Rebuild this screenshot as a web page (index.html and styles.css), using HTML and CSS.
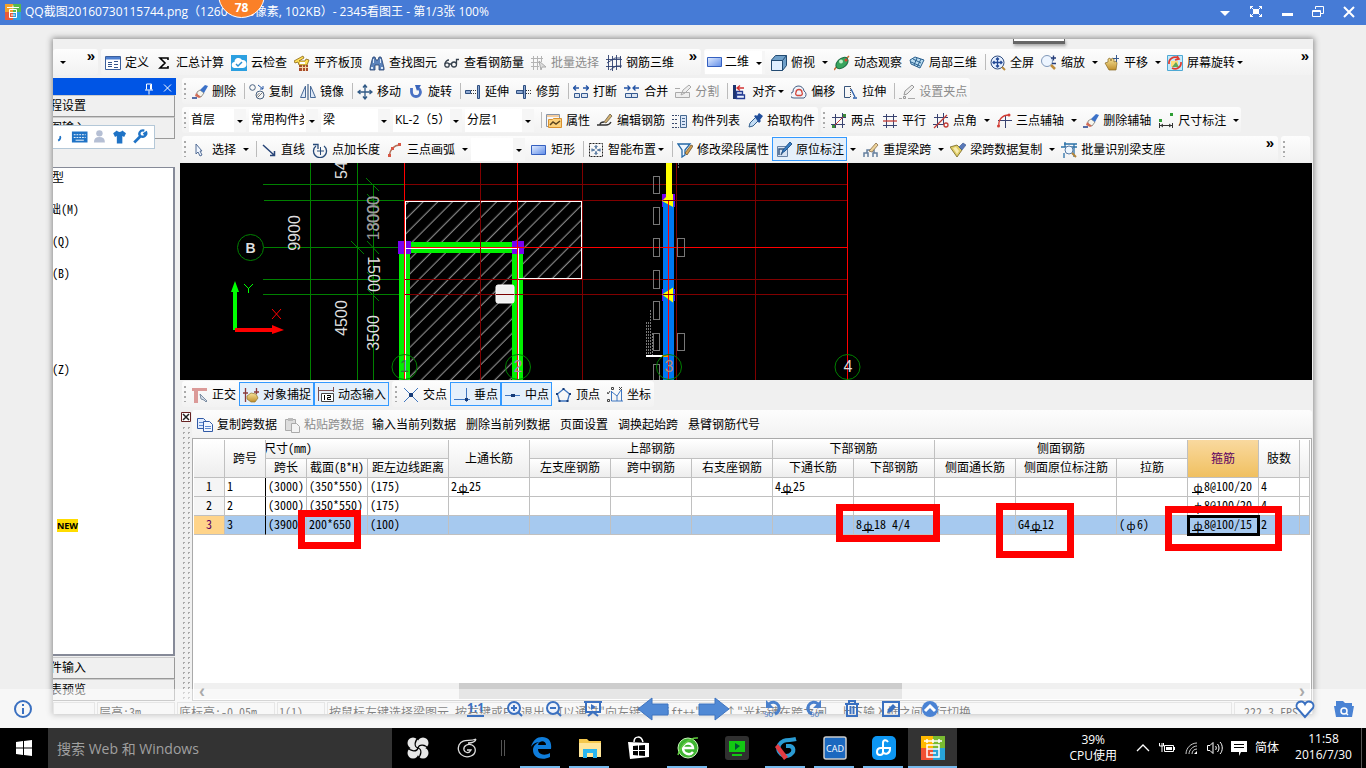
FILE: index.html
```html
<!DOCTYPE html>
<html lang="zh-CN">
<head>
<meta charset="utf-8">
<title>2345看图王</title>
<link rel="stylesheet" href="styles.css">
</head>
<body>
<svg class="sprite" aria-hidden="true">
<defs>
<linearGradient id="gBlue" x1="0" y1="0" x2="1" y2="1"><stop offset="0" stop-color="#e4eeff"/><stop offset="1" stop-color="#5f8ce8"/></linearGradient>
<linearGradient id="gGold" x1="0" y1="0" x2="0" y2="1"><stop offset="0" stop-color="#f8e49a"/><stop offset="1" stop-color="#c08f2c"/></linearGradient>
<pattern id="hatch" width="10.4" height="10.4" patternUnits="userSpaceOnUse" patternTransform="rotate(45)"><path d="M5 0V10.4" stroke="#c8c8c8" stroke-width=".8"/></pattern>
</defs>
<symbol id="define" viewBox="0 0 16 16"><path fill="#fff" stroke="#3b5f9c" d="M.5 1.500h15v13H.5z"/><path fill="#4d7fd0" d="M1 2h14v2.500H1z"/><path stroke="#34558c" d="M3 7.500h4M3 11.500h4M9 6.500h4M9 9.500h4M9 12.500h4M3 9.500h4"/></symbol>
<symbol id="sum" viewBox="0 0 16 16"><path fill="none" stroke="#000" stroke-width="1.600" d="M12 5V3H4l5 5-5 5h8v-2"/></symbol>
<symbol id="cloud" viewBox="0 0 16 16"><path fill="#2b9fe0" d="M0 0h16v16H0z"/><path fill="#fff" d="M4 13a3 3 0 0 1-.5-6A4 4 0 0 1 11 5a4 4 0 0 1 1 8z"/><path fill="none" stroke="#2b8fd0" stroke-width="1.500" d="m5 9 2 2 4-4"/></symbol>
<symbol id="align-top" viewBox="0 0 16 16"><path fill="#a84a2c" d="M5 10h9v6H5z"/><path stroke="#f4d6a8" d="M5 12.500h9M8.500 10v6M11.500 10v6"/><path fill="#ffdf55" stroke="#8a6414" stroke-width=".8" d="m0 6 9-5 1 2-5 3h6l1-2 3 1-2 5H5l-1-3-3 1z"/><path fill="#fff" d="M6 7h5v2H6z"/></symbol>
<symbol id="find" viewBox="0 0 16 16"><path fill="#5c83bb" stroke="#23406f" stroke-width=".8" d="m1 13 2-8 1-3h2l1 3h2l1-3h2l1 3 2 8v2h-5v-5H6v5H1z"/><path fill="#dce8f8" d="M2 12h2v2H2zM12 12h2v2h-2zM4 4h1v4H4zM11 4h1v4h-1z"/></symbol>
<symbol id="glasses" viewBox="0 0 16 16"><g fill="none" stroke="#35404c" stroke-width="1.300"><circle cx="3" cy="10" r="2.200"/><circle cx="10" cy="9.500" r="2.500"/><path d="M5 9h2.500M1 9c0-2 2-4 4-4M12.500 9V4.500H15"/></g></symbol>
<symbol id="batch" viewBox="0 0 16 16"><path fill="none" stroke="#b4b4b4" d="M0 3.500h12M0 7.500h10M0 11.500h8M2.500 1v14M6.500 1v14M10.500 1v6"/><path fill="#ddd" stroke="#aaa" d="m8 6 7 6h-4l-1 3z"/></symbol>
<symbol id="rebar3d" viewBox="0 0 16 16"><path fill="none" stroke="#2e406f" stroke-width=".9" d="M0 4.500h16M0 11.500h14M2.500 0v15M6.500 1v15M10.500 0v15M14.500 1v12M1 8l8-5h6M4 15l6-4h6"/></symbol>
<symbol id="rect" viewBox="0 0 16 16"><path fill="url(#gBlue)" stroke="#3560c0" d="M.5 3.500h14v9H.5z"/></symbol>
<symbol id="cube" viewBox="0 0 16 16"><path fill="#6f9fc8" stroke="#234b72" d="m.5 5 4-4.500h11v10l-4 5H.5z"/><path fill="#e0efff" d="M1 5.500h10V15H1z"/><path fill="none" stroke="#234b72" d="M.5 5.500h11v10M11.500 5.500l4-5"/></symbol>
<symbol id="orbit" viewBox="0 0 16 16"><path fill="none" stroke="#c66b33" stroke-width="1.500" d="M4 10l-4 5M12 4l3-3"/><ellipse cx="8" cy="8" rx="7" ry="4.500" fill="#39a55e" stroke="#1d6a42" transform="rotate(-40 8 8)"/><circle cx="7" cy="6.500" r="2" fill="#bff0c8"/><circle cx="12" cy="5" r="1.500" fill="#d9422e"/></symbol>
<symbol id="local3d" viewBox="0 0 16 16"><g fill="#b9dcf0" stroke="#295f8e"><path d="m1 5 5-3 9 3-4 8-9-4z"/><path fill="none" d="m4 4 8 4M8 3 5 10M12 4l-4 8M2 7l9 4"/></g></symbol>
<symbol id="full" viewBox="0 0 16 16"><circle cx="7.500" cy="7.500" r="6.500" fill="#e6f0ff" stroke="#304d80"/><path stroke="#b88a3c" stroke-width="2" d="m12 12 3 3"/><path fill="none" stroke="#244a96" stroke-width="1.300" d="M3 7.500h9M7.500 3v9M6 4.500 7.500 3 9 4.500M6 10.500 7.500 12 9 10.500M4.500 6 3 7.500 4.500 9M10.500 6 12 7.500 10.500 9"/></symbol>
<symbol id="zoom" viewBox="0 0 16 16"><circle cx="6" cy="6" r="5.500" fill="#edf5ff" stroke="#8097b8"/><path stroke="#be8c3b" stroke-width="2.500" d="m10 10 4 4"/><path stroke="#263d79" stroke-width="1.300" d="M10 3h5M12.500.5v5M11 8.500h4"/></symbol>
<symbol id="pan" viewBox="0 0 16 16"><path fill="url(#gGold)" stroke="#876720" stroke-width=".7" d="m1 8 3-1V4l2-1 1 3 1-3 2 1v3l2-1 1 2-1 7H5z"/><path fill="none" stroke="#37598c" d="M9 3.500h6M12.500 0v7"/></symbol>
<symbol id="screenrot" viewBox="0 0 16 16"><path fill="#c6e9fa" stroke="#4ea9d4" d="M.5.5h15v15H.5z"/><path fill="#ffdf7a" d="M4 6h7v6H4z"/><path fill="#61a956" d="m5 12 4-5 3 5z"/><path fill="none" stroke="#df3c30" stroke-width="1.700" d="M2 9a6 6 0 0 1 9-6M14 7a6 6 0 0 1-9 6M10 1l2 3-4 1"/></symbol>
<symbol id="erase" viewBox="0 0 16 16"><path fill="#f5f5ee" stroke="#6c6860" stroke-width=".7" d="m5 8 3-2 4 3-3 4-4-2z"/><path fill="#3b71c8" d="m8 6 5-5 3 1-4 7z"/><path fill="#d26c57" d="m4 9 5 4-2 1-4-2z"/><path stroke="#1f3f8c" stroke-width="1.500" d="M0 14h5"/></symbol>
<symbol id="copy" viewBox="0 0 16 16"><g fill="none" stroke="#49617f"><circle cx="3.500" cy="3.500" r="2.800"/><circle cx="11" cy="11" r="4"/><path stroke="#777" d="m8.500 13.500 5-5M7.500 12l3-3"/></g><path fill="none" stroke="#2657a5" d="m9 1 5 4M14 2v3h-3"/></symbol>
<symbol id="mirror" viewBox="0 0 16 16"><path fill="#e0eaf8" stroke="#486a98" d="M5.500 2v11.500h-5zM10.500 2v11.500h5z"/><path stroke="#224774" d="M8 0v16"/></symbol>
<symbol id="move" viewBox="0 0 16 16"><path fill="none" stroke="#315a86" stroke-width="1.300" d="M1 8h14M8 1v14M6 3.500 8 1l2 2.500M6 12.500 8 15l2-2.500M3.500 6 1 8l2.500 2M12.500 6 15 8l-2.500 2"/></symbol>
<symbol id="rotate" viewBox="0 0 16 16"><path fill="none" stroke="#4a72c4" stroke-width="2.800" d="M3.500 4v4a4.500 4.500 0 0 0 9 0c0-2-1-3-2.500-4"/><path fill="#3a65bb" d="M7 1h6L9 7z"/></symbol>
<symbol id="extend" viewBox="0 0 16 16"><path fill="#8fa9d2" stroke="#2e4f80" d="M.5 6.500h5v3h-5zM12.500 1.500h2v13h-2z"/><path stroke="#333" stroke-dasharray="1 1" d="M6 6.500h6M6 9.500h6"/></symbol>
<symbol id="trim" viewBox="0 0 16 16"><path fill="#8fa9d2" stroke="#2e4f80" d="M7.500 1.500h2v13h-2zM.5 6.500H7v3H.5z"/><path stroke="#333" stroke-dasharray="1 1" d="M10 6.500h6M10 9.500h6"/></symbol>
<symbol id="break" viewBox="0 0 16 16"><path fill="#dbe4f2" stroke="#34598f" d="M1.500 9.500h5v4h-5zM8.500 9.500h6v4h-6z"/><path fill="none" stroke="#2454a5" stroke-width="1.300" d="M0 4h6M3 1.500.5 4 3 6.500M10 4h6M13 1.500 15.500 4 13 6.500"/></symbol>
<symbol id="merge" viewBox="0 0 16 16"><path fill="#dbe4f2" stroke="#34598f" d="M1.500 9.500h6v4h-6zM7.500 9.500h6v4h-6z"/><path fill="none" stroke="#2454a5" stroke-width="1.300" d="M0 4h6M3.500 1.500 6 4 3.500 6.500M9 4h6M11.500 1.500 9 4l2.500 2.500"/></symbol>
<symbol id="split" viewBox="0 0 16 16"><path fill="#eee" stroke="#aaa" d="M.5 8.500h14v5H.5zM6 11l2-5 6-5 2 2-6 6z"/><path stroke="#aaa" d="M0 4.500h5"/></symbol>
<symbol id="align" viewBox="0 0 16 16"><path fill="#1c3470" d="M1 1h3v14H1z"/><path fill="#e8f0ff" stroke="#243c93" stroke-width="1.300" d="M4.500 7.500h6v3h-6zM4.500 11h8v3.500h-8z"/><path fill="none" stroke="#d23232" stroke-width="1.300" d="M5 4h7M8 1.500 5 4l3 2.500"/></symbol>
<symbol id="offset" viewBox="0 0 16 16"><path fill="#f2f5fb" stroke="#465e82" d="M3 14a3 3 0 0 1-1-6 5 5 0 0 1 11-1 4 4 0 0 1 0 7z"/><path fill="none" stroke="#d2473c" stroke-width="1.300" d="M6 11.500a2 2 0 0 1-1-3 3 3 0 0 1 6 0 2 2 0 0 1-1 3z"/></symbol>
<symbol id="stretch" viewBox="0 0 16 16"><path fill="none" stroke="#38557c" d="M8 2.500H2.500v11H8"/><path fill="none" stroke="#555" stroke-dasharray="1 1" d="M8.500 2v12"/><path stroke="#285ca8" stroke-width="1.300" d="m9 5 4 8M11 14h4"/></symbol>
<symbol id="grip-point" viewBox="0 0 16 16"><path fill="#eee" stroke="#999" d="m5 11 1-4 7-6 2 2-7 7zM4.500 12.500h2v2h-2z"/><path stroke="#aaa" d="M0 14.500h3M9 14.500h7"/></symbol>
<symbol id="props" viewBox="0 0 16 16"><path fill="#f5f7fb" stroke="#8794a8" d="M.5 1.500h13v12H.5z"/><path stroke="#f0a040" d="M1 3h12"/><path fill="#fcd07a" stroke="#d9912e" d="M2.500 6.500h4l1-1h8v9h-13z"/><path fill="none" stroke="#5b4520" stroke-width="1.500" d="m4 12 3-3 3 2 4-3"/></symbol>
<symbol id="editbar" viewBox="0 0 16 16"><path fill="#d4b170" stroke="#655b46" stroke-width=".8" d="m7 9 6-8 2 2-6 7z"/><path fill="none" stroke="#333" stroke-width="1.300" d="M0 12h9c2 0 4-1 5-3M3 12c0-3 2-3 4-3"/></symbol>
<symbol id="list" viewBox="0 0 16 16"><path fill="#dce7f8" stroke="#456890" d="M8.500 2.500h6v12h-6z"/><path stroke="#456890" d="M10 5.500h3M10 8.500h3M10 11.500h3"/><path stroke="#39486a" stroke-dasharray="2 1" d="M0 2.500h7M0 6.500h6M0 10.500h6M0 14.500h7"/></symbol>
<symbol id="pick" viewBox="0 0 16 16"><path fill="#c3dcf4" stroke="#34618f" d="m2 14 1-4 6-6 3 3-6 6z"/><path fill="#214f9c" d="m7 3 2-1 1 1 2-3 4 3-3 4 1 1-2 2z"/></symbol>
<symbol id="two" viewBox="0 0 16 16"><path fill="none" stroke="#384270" d="M1 4.500h14M0 11.500h14M4.500 1v14M11.500 0v15"/><path stroke="#c33b35" d="m2 14 12-12"/><path fill="#3f8b3a" d="M1 12h3v3H1zM12 1h3v3h-3z"/></symbol>
<symbol id="parallel" viewBox="0 0 16 16"><path fill="none" stroke="#384270" d="M1 3.500h14M1 12.500h14M4.500 1v14M11.500 1v14"/><path stroke="#c33b35" stroke-width="1.300" d="M1 8h14"/></symbol>
<symbol id="angle" viewBox="0 0 16 16"><path fill="none" stroke="#384270" d="M1 4.500h14M0 11.500h10M4.500 1v14M10.500 0v12"/><path fill="none" stroke="#c33b35" stroke-width="1.300" d="m1 15 13-13"/><circle cx="13" cy="12" r="2" fill="none" stroke="#c33b35" stroke-width="1.300"/></symbol>
<symbol id="threeaxis" viewBox="0 0 16 16"><path stroke="#384270" d="M2 7.500h14M9.500 2v13"/><path fill="none" stroke="#d23d35" stroke-width="1.300" d="M3 13C2 7 6 2 13 2"/><circle cx="2.500" cy="13" r="1.500" fill="#d23d35"/><circle cx="13" cy="2" r="1.500" fill="#d23d35"/></symbol>
<symbol id="dim" viewBox="0 0 16 16"><path fill="#2f9e35" d="M1 6h3v3H1zM12 0h3v3h-3z"/><path fill="none" stroke="#333" d="M1.500 10v5M14.500 10v5M2 12.500h12M5 11l-2 1.500L5 14M11 11l2 1.500-2 1.500"/></symbol>
<symbol id="cursor" viewBox="0 0 16 16"><path fill="#f0f6ff" stroke="#526c95" d="m4 2 6 7H8l2 4-2 1-2-4-2 2z"/></symbol>
<symbol id="line" viewBox="0 0 16 16"><path fill="none" stroke="#274477" stroke-width="1.500" d="m2 3 11 10M9 13.500h4.500V9"/></symbol>
<symbol id="length" viewBox="0 0 16 16"><path fill="none" stroke="#274a79" stroke-width="1.300" d="M4 4a6.500 6.500 0 1 0 8 0M1 2.500h5V7"/><path fill="none" stroke="#274a79" d="M5 9h7M8.500 5v8"/></symbol>
<symbol id="arc" viewBox="0 0 16 16"><path fill="none" stroke="#b0705a" stroke-width="1.300" d="M2.500 14C2.500 8 7 3 13 3"/><path fill="#d85745" d="M1 12h3v3H1zM4 5h3v3H4zM11 1h3v3h-3z"/></symbol>
<symbol id="smart" viewBox="0 0 16 16"><path fill="none" stroke="#222" stroke-dasharray="2 1" d="M1.500 1.500h13v13h-13z"/><path fill="none" stroke="#315b8b" d="M3 8h4M9 8h4M8 3v4M8 9v4M4 6.500 5.500 8 4 9.500M12 6.500 10.500 8 12 9.500M6.500 4 8 5.500 9.500 4M6.500 12 8 10.500 9.500 12"/></symbol>
<symbol id="filter" viewBox="0 0 16 16"><path fill="#eef6ff" stroke="#2367a5" stroke-width="1.300" d="M1 2h12L8 8v5l-3 2V8z"/><path fill="#d4a152" stroke="#68512c" stroke-width=".8" d="m8 11 6-8 2 1-6 9z"/></symbol>
<symbol id="inplace" viewBox="0 0 16 16"><path fill="#d6e2f2" stroke="#6882a5" d="M1.500 4.500h10v10h-10z"/><path fill="none" stroke="#3c5c83" stroke-width="1.500" d="M3 13V7h5M5 13l3-6"/><path fill="#367ec5" stroke="#24588f" d="m6 11 1-3 7-8 2 2-7 7z"/></symbol>
<symbol id="span" viewBox="0 0 16 16"><path fill="none" stroke="#65809f" stroke-width="1.500" d="M1 15v-4h4v4M10 15v-4h4v4M4 11V8h7v3"/><path fill="#eed39a" stroke="#876b46" stroke-width=".8" d="m6 9 7-8 2 2-6 7z"/></symbol>
<symbol id="brush" viewBox="0 0 16 16"><path fill="#dfcc65" stroke="#746422" stroke-width=".8" d="m0 5 7-2 5 5-5 7z"/><path fill="#f7ecb0" d="m3 6 3-1 3 4-2 3z"/><path fill="#5879b9" stroke="#35508c" stroke-width=".6" d="m9 5 4-4 3 2-4 5z"/></symbol>
<symbol id="identify" viewBox="0 0 16 16"><path stroke="#2b71a8" stroke-width="1.300" d="M3 2h13M0 5h5M10 5h6M4 0v5M13 2v13M3 11v5"/><circle cx="8" cy="8" r="4" fill="#eef7ff" stroke="#5579a4"/><path stroke="#b3853b" stroke-width="2" d="m11 11 4 4"/></symbol>
<symbol id="ortho" viewBox="0 0 16 16"><path fill="#db9a98" d="M0 1h15v3H6v12H2V4H0z"/><path fill="#d4dde8" stroke="#71839a" stroke-width=".9" d="m8 7 5 5 2 2-1 1-2-2-3-1z"/></symbol>
<symbol id="snap" viewBox="0 0 16 16"><path stroke="#8a3b3b" stroke-width="1.300" d="M2.500 1v14M0 6h5M13.500 1v6M11 5h5"/><path fill="url(#gGold)" stroke="#8f722d" stroke-width=".7" d="m4 9 4-3 5 1 2 4-3 4H8l-4-3z"/></symbol>
<symbol id="dyn" viewBox="0 0 16 16"><path stroke="#7c4f4f" d="M.5 0v14M15.500 0v5M1 3.500h14"/><path fill="#fff" stroke="#444" d="M3.500 6.500h12v8h-12z"/><path fill="none" stroke="#000" d="M6.500 8v5M9 8.500h3.500v2h-3v2H13"/></symbol>
<symbol id="cross" viewBox="0 0 16 16"><path stroke="#3f76c0" d="m1 1 14 14M15 1 1 15"/><path fill="#173c78" d="M6 6h4v4H6z"/></symbol>
<symbol id="perp" viewBox="0 0 16 16"><path stroke="#3f76c0" d="M0 12.500h16M12.500 1v14"/><path fill="#173c78" d="M11 11h3v3h-3z"/></symbol>
<symbol id="mid" viewBox="0 0 16 16"><path stroke="#3f76c0" d="M0 8.500h15"/><path fill="#173c78" d="M6 7h4v3H6z"/></symbol>
<symbol id="penta" viewBox="0 0 16 16"><path fill="none" stroke="#3f76c0" stroke-width="1.300" d="m7.500 2 6 5-2 7h-8l-2-7z"/><path fill="#173c78" d="M6.500 1h2v2h-2zM0 6h2v2H0zM13 6h2v2h-2zM2.500 13h2v2h-2zM10.500 13h2v2h-2z"/></symbol>
<symbol id="coord" viewBox="0 0 16 16"><path fill="none" stroke="#3f76c0" d="M4.500 4v10H16M5 5l5 4 4-6M10 9v5M14.500 3v11"/><path fill="none" stroke="#444" d="M4.500.500h2v2h-2zM12 0l3 3M15 0l-3 3M.5 12.500h2v2h-2zM0 5l1 2 2-3"/></symbol>
<symbol id="doc-copy" viewBox="0 0 16 16"><path fill="#e1ecff" stroke="#315aa6" d="M.5 1.500h6l2 2v8h-8z"/><path fill="#f3f7ff" stroke="#315aa6" d="M6.500 4.500h6l3 3v7h-9z"/><path stroke="#5e89cf" d="M2 5.500h4M2 8.500h4M8 9.500h6M8 11.500h6"/></symbol>
<symbol id="paste" viewBox="0 0 16 16"><path fill="#ddd" stroke="#aaa" d="M1.500 2.500h10v11h-10z"/><path fill="#bbb" d="M4 1h5v3H4z"/><path fill="#f4f4f4" stroke="#aaa" d="M7.500 6.500h5l3 3v6h-8z"/></symbol>
</svg>

<header class="titlebar">
  <svg class="icon" viewBox="0 0 16 16"><path fill="#f3a22c" d="M0 0h8v8H0z"/><path fill="#57b94c" d="M8 0h8v8H8z"/><path fill="#e85a3c" d="M0 8h8v8H0z"/><path fill="#2f9fe0" d="M8 8h8v8H8z"/><path fill="none" stroke="#fff" d="M2 3.500h12M8 1.500v3M4.500 5.500h7v8h-7zM5 8.500h6M6 11h4"/></svg>
  <h1>QQ截图20160730115744.png（1260*675像素, 102KB）- 2345看图王 - 第1/3张 100%</h1>
  <div class="window-buttons">
    <button aria-label="菜单"><svg viewBox="0 0 16 16"><path fill="#fff" d="M3 7h10l-5 5z"/></svg></button>
    <button aria-label="全屏"><svg viewBox="0 0 16 16"><path fill="#fff" d="M5 5h6v5H5z"/><path fill="none" stroke="#fff" d="M2.500 5V2.500H5M11 2.500h2.500V5M2.500 10v2.500H5M11 12.500h2.500V10M2 2l3 3M14 2l-3 3M2 13l3-3M14 13l-3-3"/></svg></button>
    <button aria-label="最小化"><svg viewBox="0 0 16 16"><path fill="#fff" d="M3 9h11v3H3z"/></svg></button>
    <button aria-label="还原"><svg viewBox="0 0 16 16"><path fill="none" stroke="#fff" d="M5.500 5V2.500h8v7H11"/><path fill="none" stroke="#fff" d="M2.500 6.500h8v6h-8zM3 7.500h7"/></svg></button>
    <button aria-label="关闭"><svg viewBox="0 0 16 16"><path stroke="#fff" stroke-width="2" d="m3 3 10 10M13 3 3 13"/></svg></button>
  </div>
  <div class="badge">78</div>
</header>

<main class="stage">
 <section class="picture">
  <div class="cut-strip"><span></span></div>
  <div class="bar-row top-row">
    <div class="bar stub"><i class="arrow"></i><span class="more">»</span></div>
    <div class="bar first-bar">
      <button class="tool"><svg><use href="#define"/></svg>定义</button>
      <button class="tool"><svg><use href="#sum"/></svg>汇总计算</button>
      <button class="tool"><svg><use href="#cloud"/></svg>云检查</button>
      <button class="tool"><svg><use href="#align-top"/></svg>平齐板顶</button>
      <button class="tool"><svg><use href="#find"/></svg>查找图元</button>
      <button class="tool"><svg><use href="#glasses"/></svg>查看钢筋量</button>
      <button class="tool" disabled><svg><use href="#batch"/></svg>批量选择</button>
      <button class="tool"><svg><use href="#rebar3d"/></svg>钢筋三维</button>
      <span class="more">»</span>
    </div>
    <div class="bar grow">
      <label class="combo view"><svg><use href="#rect"/></svg><select aria-label="视图"><option>二维</option></select></label>
      <button class="tool"><svg><use href="#cube"/></svg>俯视<i class="arrow"></i></button>
      <button class="tool"><svg><use href="#orbit"/></svg>动态观察</button>
      <button class="tool"><svg><use href="#local3d"/></svg>局部三维</button>
      <i class="sep"></i>
      <button class="tool"><svg><use href="#full"/></svg>全屏</button>
      <button class="tool"><svg><use href="#zoom"/></svg>缩放<i class="arrow"></i></button>
      <button class="tool"><svg><use href="#pan"/></svg>平移<i class="arrow"></i></button>
      <button class="tool"><svg><use href="#screenrot"/></svg>屏幕旋转<i class="arrow tight"></i></button>
      <span class="more">»</span>
    </div>
  </div>

  <div class="work">
   <aside class="side">
    <div class="side-title"><svg viewBox="0 0 34 14"><path fill="none" stroke="#fff" d="M3 10.500h8M7 11v4M4.500 10V4.500h5V10M8.500 5v5"/><path stroke="#fff" d="m22 5 7 7M29 5l-7 7"/></svg></div>
    <button class="side-tab">程设置</button>
    <button class="side-tab">图输入</button>
    <div class="side-gap"></div>
    <ul class="tree">
      <li>型</li><li class="cut">础(M)</li><li>(Q)</li><li>(B)</li><li></li><li></li><li>(Z)</li>
      <li class="new"><b>NEW</b></li>
    </ul>
    <button class="side-tab">件输入</button>
    <button class="side-tab">表预览</button>
    <div class="ime">
      <svg viewBox="0 0 102 24"><path fill="none" stroke="#1f73c6" stroke-width="2" d="M3 11c1 2 0 4-2 5"/><path fill="#1f73c6" d="M16 6h17v12H16z"/><path stroke="#fff" stroke-dasharray="2 1" d="M18 9.500h13M18 12.500h13"/><path stroke="#fff" d="M20 15.500h9"/><g fill="#b5bfd4"><circle cx="46" cy="8" r="3.500"/><path d="M40 18c0-4 2-6 6-6s6 2 6 6z"/></g><path fill="#1f73c6" d="m61 8 4-3c1 2 5 2 6 0l4 3-2 4-2-1v8h-6v-8l-2 1z"/><path stroke="#1f73c6" stroke-width="3" d="m84 18 7-7"/><path fill="none" stroke="#1f73c6" stroke-width="2.500" d="M95 5c-5-1-7 4-4 6 3 2 7-1 6-4l-3 2"/></svg>
    </div>
   </aside>

   <div class="content">
    <div class="bar-row">
     <div class="bar"><i class="grip"></i>
      <button class="tool"><svg><use href="#erase"/></svg>删除</button><i class="sep"></i>
      <button class="tool"><svg><use href="#copy"/></svg>复制</button>
      <button class="tool"><svg><use href="#mirror"/></svg>镜像</button><i class="sep"></i>
      <button class="tool"><svg><use href="#move"/></svg>移动</button>
      <button class="tool"><svg><use href="#rotate"/></svg>旋转</button><i class="sep"></i>
      <button class="tool"><svg><use href="#extend"/></svg>延伸</button>
      <button class="tool"><svg><use href="#trim"/></svg>修剪</button><i class="sep"></i>
      <button class="tool"><svg><use href="#break"/></svg>打断</button>
      <button class="tool"><svg><use href="#merge"/></svg>合并</button>
      <button class="tool" disabled><svg><use href="#split"/></svg>分割</button><i class="sep"></i>
      <button class="tool"><svg><use href="#align"/></svg>对齐<i class="arrow tight"></i></button>
      <button class="tool"><svg><use href="#offset"/></svg>偏移</button>
      <button class="tool"><svg><use href="#stretch"/></svg>拉伸</button><i class="sep"></i>
      <button class="tool" disabled><svg><use href="#grip-point"/></svg>设置夹点</button>
     </div>
    </div>
    <div class="bar-row">
     <div class="bar"><i class="grip"></i>
      <label class="combo short"><select aria-label="楼层"><option>首层</option></select></label>
      <label class="combo"><select aria-label="构件类型"><option>常用构件类</option></select></label>
      <label class="combo"><select aria-label="构件"><option>梁</option></select></label>
      <label class="combo"><select aria-label="名称"><option>KL-2（5）</option></select></label>
      <label class="combo"><select aria-label="分层"><option>分层1</option></select></label><i class="sep"></i>
      <button class="tool"><svg><use href="#props"/></svg>属性</button>
      <button class="tool"><svg><use href="#editbar"/></svg>编辑钢筋</button>
      <button class="tool"><svg><use href="#list"/></svg>构件列表</button>
      <button class="tool"><svg><use href="#pick"/></svg>拾取构件</button>
     </div>
     <div class="bar"><i class="grip"></i>
      <button class="tool"><svg><use href="#two"/></svg>两点</button>
      <button class="tool"><svg><use href="#parallel"/></svg>平行</button>
      <button class="tool"><svg><use href="#angle"/></svg>点角<i class="arrow"></i></button>
      <button class="tool"><svg><use href="#threeaxis"/></svg>三点辅轴<i class="arrow"></i></button>
      <button class="tool"><svg><use href="#erase"/></svg>删除辅轴</button>
      <button class="tool"><svg><use href="#dim"/></svg>尺寸标注<i class="arrow"></i></button>
     </div>
    </div>
    <div class="bar-row">
     <div class="bar grow"><i class="grip"></i>
      <button class="tool"><svg><use href="#cursor"/></svg>选择<i class="arrow"></i></button><i class="sep"></i>
      <button class="tool"><svg><use href="#line"/></svg>直线</button>
      <button class="tool"><svg><use href="#length"/></svg>点加长度</button>
      <button class="tool"><svg><use href="#arc"/></svg>三点画弧<i class="arrow"></i></button>
      <label class="combo narrow"><select aria-label="半径"><option></option></select></label>
      <button class="tool"><svg><use href="#rect"/></svg>矩形</button><i class="sep"></i>
      <button class="tool"><svg><use href="#smart"/></svg>智能布置<i class="arrow tight"></i></button><i class="sep"></i>
      <button class="tool"><svg><use href="#filter"/></svg>修改梁段属性</button>
      <button class="tool on"><svg><use href="#inplace"/></svg>原位标注</button><i class="arrow split"></i>
      <button class="tool"><svg><use href="#span"/></svg>重提梁跨<i class="arrow"></i></button>
      <button class="tool"><svg><use href="#brush"/></svg>梁跨数据复制<i class="arrow"></i></button>
      <button class="tool"><svg><use href="#identify"/></svg>批量识别梁支座</button>
      <span class="more">»</span>
     </div>
     <div class="bar tail"><i class="grip"></i></div>
    </div>

    <div class="drawing">
     <svg width="1132" height="217" viewBox="180 163 1132 217" font-family="Liberation Sans, Arial, sans-serif">
      <path fill="url(#hatch)" d="M405 201h177v77h-64v102H405z"/>
      <g fill="none" stroke="#008000" shape-rendering="crispEdges"><path d="M310.500 163v217M357.500 163v217M373.500 184v196M263 184.500h142M264 200.500h141M264 247.500h141M263 279.500h142M263 294.500h142"/></g>
      <path fill="none" stroke="#008000" d="m366 178 13 13M367 194l12 13M351 241l13 13M367 241l12 13M367 272l12 13M367 289l12 12"/>
      <path fill="#00f000" d="M399 242h125v11H399zM399 253h11v127h-11zM512 253h11v127h-11z"/>
      <path fill="#7800f0" d="M398 241h13v13h-13zM512 241h12v13h-12zM662 194h13v13h-13zM662 289h13v12h-13z"/>
      <path fill="#0078f0" d="M663 200h11v180h-11z"/>
      <path fill="none" stroke="#fff" shape-rendering="crispEdges" d="M405.500 380V201.500h176v77h-64M406 248.500h112V380"/>
      <g shape-rendering="crispEdges" fill="none"><path stroke="#800000" d="M405 184.500h443M405 200.500h443M405 279.500h443M405 294.500h443M480.500 163v217M582.500 163v217M676.500 163v217M755.500 163v217"/><path stroke="#f00" d="M404.500 163v217M517.500 163v217M847.500 163v217M411 247.500h437"/></g>
      <path fill="#ff0" d="M666 163h6v31h1v13l-11-6 4-4zM662 294.500l11-7v15z"/>
      <path stroke="#f00" shape-rendering="crispEdges" d="M668.500 201v179"/>
      <path stroke="#780000" d="M663 200.500h10M663 294.500h10"/>
      <rect x="496" y="285" width="18" height="18" rx="2" fill="#f0f0f0" stroke="#fff"/><path stroke="#780000" d="M496 294.500h18"/>
      <g fill="none" stroke="#777" shape-rendering="crispEdges"><path d="M653.500 176.500h6v17h-6zM653.500 207.500h6v17h-6zM653.500 238.500h6v18h-6zM653.500 270.500h6v18h-6zM653.500 301.500h6v18h-6zM653.500 333.500h6v17h-6zM653.500 364.500h6v18h-6zM677.500 238.500h7v18h-7zM677.500 333.500h7v17h-7z"/><path stroke-dasharray="2 1" d="M646.500 322v33M648.500 322v33M650.500 310v45M652 333v22M678.500 163v6"/></g>
      <path stroke="#fff" stroke-width="2" d="M646 356h16"/><path stroke="#f90" stroke-width="2" d="M662 356h6"/>
      <g fill="none" stroke="#008000"><circle cx="250.500" cy="247.500" r="13"/><circle cx="404.500" cy="367" r="12.500"/><circle cx="518" cy="367" r="12.500"/><circle cx="669" cy="367" r="12.500"/><circle cx="847.500" cy="367" r="12.500"/></g>
      <g fill="#ddd" font-size="16" text-anchor="middle"><text x="250.500" y="253" font-size="14" font-weight="bold">B</text><text x="404.500" y="372" fill="#3a6b3a">1</text><text x="518" y="372" fill="#a986b0">2</text><text x="669" y="372" fill="#b18770">3</text><text x="848" y="372">4</text>
       <text transform="translate(347 170) rotate(-90)">54</text><text transform="translate(300 233) rotate(-90)">9900</text><text fill="#999" transform="translate(379 218) rotate(-90)">18000</text><text fill="#999" transform="translate(379 214) rotate(-90)">3000</text><text transform="translate(368 274) rotate(90)">1500</text><text transform="translate(347 318) rotate(-90)">4500</text><text transform="translate(379 333) rotate(-90)">3500</text></g>
      <path fill="#0f0" d="M233 330v-38h-2l4-11 4 11h-2v38z"/><path fill="#f00" d="M235 328h37v-3l12 5-12 4v-2h-37z"/>
      <path fill="none" stroke="#0f0" d="m244 284 4.500 4.500L253 284M248.500 288v5"/><path stroke="#f00" d="m272 309 9 10M281 309l-9 10"/>
     </svg>
    </div>

    <div class="bar-row snap-row">
     <div class="bar"><i class="grip"></i>
      <button class="tool"><svg><use href="#ortho"/></svg>正交</button>
      <button class="tool on"><svg><use href="#snap"/></svg>对象捕捉</button>
      <button class="tool on"><svg><use href="#dyn"/></svg>动态输入</button>
     </div>
     <div class="bar"><i class="grip"></i>
      <button class="tool"><svg><use href="#cross"/></svg>交点</button>
      <button class="tool on"><svg><use href="#perp"/></svg>垂点</button>
      <button class="tool on"><svg><use href="#mid"/></svg>中点</button>
      <button class="tool"><svg><use href="#penta"/></svg>顶点</button>
      <button class="tool"><svg><use href="#coord"/></svg>坐标</button>
     </div>
    </div>

    <div class="sheet">
     <div class="handle"><svg viewBox="0 0 10 10"><path fill="#fff" stroke="#622" d="M.5.5h9v9h-9z"/><path stroke="#222" stroke-width="1.500" d="m2 2 6 6M8 2 2 8"/></svg><i></i></div>
     <div class="sheet-main">
      <div class="bar sheet-bar">
       <button class="tool"><svg><use href="#doc-copy"/></svg>复制跨数据</button>
       <button class="tool" disabled><svg><use href="#paste"/></svg>粘贴跨数据</button>
       <button class="tool text">输入当前列数据</button><button class="tool text">删除当前列数据</button><button class="tool text">页面设置</button><button class="tool text">调换起始跨</button><button class="tool text">悬臂钢筋代号</button>
      </div>
      <div class="grid">
       <table>
        <colgroup><col class="w31"><col class="w41"><col class="w41"><col class="w61"><col class="w81"><col class="w81"><col class="w81"><col class="w81"><col class="w81"><col class="w81"><col class="w81"><col class="w81"><col class="w101"><col class="w71"><col class="w71"><col class="w41"><col></colgroup>
        <thead>
         <tr><th rowspan="2"></th><th rowspan="2" class="frozen">跨号</th><th colspan="3" class="left">尺寸(mm)</th><th rowspan="2">上通长筋</th><th colspan="3">上部钢筋</th><th colspan="2">下部钢筋</th><th colspan="3">侧面钢筋</th><th rowspan="2" class="hot">箍筋</th><th rowspan="2">肢数</th><th rowspan="2"></th></tr>
         <tr><th>跨长</th><th>截面(B*H)</th><th>距左边线距离</th><th>左支座钢筋</th><th>跨中钢筋</th><th>右支座钢筋</th><th>下通长筋</th><th>下部钢筋</th><th>侧面通长筋</th><th>侧面原位标注筋</th><th>拉筋</th></tr>
        </thead>
        <tbody>
         <tr><th>1</th><td class="frozen">1</td><td>(3000)</td><td>(350*550)</td><td>(175)</td><td>2<u>ф</u>25</td><td></td><td></td><td></td><td>4<u>ф</u>25</td><td></td><td></td><td></td><td></td><td><u>ф</u>8@100/20</td><td>4</td><td></td></tr>
         <tr><th>2</th><td class="frozen">2</td><td>(3000)</td><td>(350*550)</td><td>(175)</td><td></td><td></td><td></td><td></td><td></td><td></td><td></td><td></td><td></td><td><u>ф</u>8@100/20</td><td>4</td><td></td></tr>
         <tr class="current"><th>3</th><td class="frozen">3</td><td>(3900</td><td>200*650</td><td>(100)</td><td></td><td></td><td></td><td></td><td></td><td>8<u>ф</u>18 4/4</td><td></td><td>G4<u>ф</u>12</td><td>(<u class="plain">ф</u>6)</td><td class="focus"><u>ф</u>8@100/15</td><td>2</td><td></td></tr>
        </tbody>
       </table>
       <div class="scroll"><span>‹</span><i></i><span>›</span></div>
       <div class="mark m1"></div><div class="mark m2"></div><div class="mark m3"></div><div class="mark m4"></div>
      </div>
     </div>
    </div>
   </div>
  </div>
  <footer class="status"><span class="s1"></span><span class="s2">层高:3m</span><span class="s3">底标高:-0.05m</span><span class="s4">1(1)</span><span class="s5">按鼠标左键选择梁图元,按右键或ESC退出;可以通过"向左键及shift++"→←↑"光标键在跨之间、上下输入框之间进行切换</span><span class="s6">222.3 FPS</span></footer>
 </section>

 <nav class="viewer">
  <div><button aria-label="信息"><svg viewBox="0 0 20 20"><circle cx="10" cy="10" r="8" fill="none" stroke="#3a70c0" stroke-width="2"/><path stroke="#3a70c0" stroke-width="2" d="M10 5v2M10 9v6"/></svg></button></div>
  <div class="viewer-mid">
   <button class="ratio">1:1</button>
   <button aria-label="放大"><svg viewBox="0 0 20 20"><circle cx="9" cy="9" r="6" fill="#edf2fb" stroke="#3a70c0" stroke-width="2"/><path stroke="#3a70c0" stroke-width="2" d="m13 13 4 4M6 9h6M9 6v6"/></svg></button>
   <button aria-label="缩小"><svg viewBox="0 0 20 20"><circle cx="9" cy="9" r="6" fill="#edf2fb" stroke="#3a70c0" stroke-width="2"/><path stroke="#3a70c0" stroke-width="2" d="m13 13 4 4M6 9h6"/></svg></button>
   <button aria-label="幻灯片"><svg viewBox="0 0 20 20"><path fill="none" stroke="#3a70c0" stroke-width="2" d="M1 3h18M3 3v10h14V3M10 13l-5 4M10 13l5 4"/><path fill="#3a70c0" d="m8 5 5 3-5 3z"/></svg></button>
   <button class="wide" aria-label="上一张"><svg viewBox="0 0 32 24"><path fill="#5089d5" stroke="#3f75c0" d="M1 12 15 1v6h16v11H15v5z"/></svg></button>
   <button class="wide" aria-label="下一张"><svg viewBox="0 0 32 24"><path fill="#5089d5" stroke="#3f75c0" d="M31 12 17 1v6H1v11h16v5z"/></svg></button>
   <button aria-label="左转90°"><svg viewBox="0 0 20 20"><path fill="none" stroke="#4a80cc" stroke-width="3" d="M5 5a6 6 0 1 1 6 10"/><path fill="#4a80cc" d="M2 1v8h8z"/><text x="0" y="18">90°</text></svg></button>
   <button aria-label="右转90°"><svg viewBox="0 0 20 20"><path fill="none" stroke="#4a80cc" stroke-width="3" d="M15 5A6 6 0 1 0 9 15"/><path fill="#4a80cc" d="M18 1v8h-8z"/><text x="7" y="18">90°</text></svg></button>
   <button aria-label="删除"><svg viewBox="0 0 20 20"><path fill="none" stroke="#3a70c0" stroke-width="2" d="M3 5h14M7 5V2h6v3M5 6v11h10V6M8.500 7v8M11.500 7v8"/></svg></button>
   <button aria-label="编辑"><svg viewBox="0 0 20 20"><path fill="none" stroke="#3a70c0" stroke-width="2" d="M2 3h16v14H2z"/><path fill="#3a70c0" d="m6 14 1-4 5-5 3 3-5 5z"/></svg></button>
   <button aria-label="收起"><svg viewBox="0 0 20 20"><circle cx="10" cy="10" r="8" fill="#4a83d4"/><path fill="none" stroke="#fff" stroke-width="3" d="m5 12 5-5 5 5"/></svg></button>
  </div>
  <div class="viewer-end">
   <button aria-label="收藏"><svg viewBox="0 0 20 20"><path fill="#fff" stroke="#3a70c0" stroke-width="2" d="M10 18 2 9a4 4 0 0 1 8-4 4 4 0 0 1 8 4z"/></svg></button>
   <button aria-label="打开文件夹"><svg viewBox="0 0 20 20"><path fill="#4a83d4" d="M2 2h7l2 2h7v3H2zM0 7h20l-2 11H2z"/><circle cx="10" cy="12" r="3" fill="none" stroke="#fff" stroke-width="1.500"/><path stroke="#fff" stroke-width="1.500" d="m12 14 2 2"/></svg></button>
  </div>
 </nav>
</main>

<footer class="taskbar">
 <button class="start" aria-label="开始"><svg viewBox="0 0 16 16"><path fill="#fff" d="m0 2 7-1v6.500H0zM8 1l8-1v7.500H8zM0 8.500h7V15l-7-1zM8 8.500h8V16l-8-1z"/></svg></button>
 <input class="search" type="text" placeholder="搜索 Web 和 Windows" aria-label="搜索">
 <div class="apps">
  <button aria-label="风扇"><svg viewBox="0 0 24 24"><g fill="#e8e8e8"><circle cx="7" cy="7" r="5.500"/><circle cx="17" cy="7" r="5.500"/><circle cx="7" cy="17" r="5.500"/><circle cx="17" cy="17" r="5.500"/><path d="M7 7h10v10H7z"/></g><path fill="none" stroke="#000" stroke-width="1.200" d="M12 12C8 11 8 5 13 1M12 12c1-4 7-4 11 1M12 12c4 1 4 7-1 11M12 12c-1 4-7 4-11-1"/></svg></button>
  <button aria-label="龙"><svg viewBox="0 0 24 24"><path fill="none" stroke="#ddd" stroke-width="1.300" d="M21 3c-7 3-13-1-17 6-3 8 5 14 12 11 5-2 6-8 1-11-4-2-9 1-8 5 1 3 5 4 7 0h-4M21 3c-1 4-5 4-8 4"/></svg></button>
  <i class="task-sep"></i>
  <button class="run" aria-label="Edge"><svg viewBox="0 0 24 24"><path fill="#0f7ddb" d="M2 11C4 4 8 1 13 1c7 0 10 5 9 12H9c0 6 7 7 12 4v4c-8 4-17 1-17-7 0-4 3-7 7-8-5 0-8 3-9 5zm7-2h8c0-5-7-5-8 0z"/></svg></button>
  <button class="run" aria-label="文件资源管理器"><svg viewBox="0 0 24 24"><path fill="#f4c74c" d="M1 3h8l2 2h12v16H1z"/><path fill="#ffe69a" d="M1 7h22v14H1z"/><path fill="#29b5ee" d="M5 13h14v9h-4v-5H9v5H5z"/></svg></button>
  <button aria-label="应用商店"><svg viewBox="0 0 24 24"><path fill="#fff" d="m1 6 21 1v14L3 23z"/><path fill="none" stroke="#fff" stroke-width="1.500" d="M7 6c0-6 7-7 9 0"/><path fill="#000" d="m6 10 5-.5V14H6zM12 9.500l6-.5v5h-6zM6 15h5v4.500L6 19zM12 15h6v5l-6-.5z"/></svg></button>
  <button class="run" aria-label="浏览器"><svg viewBox="0 0 24 24"><circle cx="12" cy="12" r="10" fill="#3fb532" stroke="#c9f5b9"/><path fill="none" stroke="#fff" stroke-width="2.500" d="M17 16c-3 4-10 2-10-4s10-6 10 0H8"/><path fill="none" stroke="#5cc83c" stroke-width="1.500" d="M2 19C4 10 14 1 22 2"/></svg></button>
  <button aria-label="播放器"><svg viewBox="0 0 24 24"><rect width="24" height="24" rx="3" fill="#303030"/><path fill="#13c813" d="M4 5h16v11H4zM7 18h10v2H7z"/><path fill="#053" d="m10 7 5 3-5 4z"/></svg></button>
  <button class="run" aria-label="广联达"><svg viewBox="0 0 24 24"><path fill="none" stroke="#2a9bd3" stroke-width="4" d="M22 3c-7 2-13-1-17 6-3 8 5 13 11 10 5-3 4-8 0-9h-4"/><path fill="#e23c43" d="m1 11 3-3 10 13-4 3z"/></svg></button>
  <button class="run" aria-label="CAD"><svg viewBox="0 0 24 24"><rect x="1" y="1" width="22" height="22" rx="2" fill="#1b68bf" stroke="#ccc" stroke-width="1.500"/><text x="12" y="16" text-anchor="middle" fill="#fff" font-size="9">CAD</text></svg></button>
  <button class="run" aria-label="剪切"><svg viewBox="0 0 24 24"><rect width="24" height="24" rx="5" fill="#0d96f2"/><path fill="none" stroke="#fff" stroke-width="2" d="M16 6c-2-3-5-2-5 1v9c0 4-6 4-6 0 0-2 1-4 4-4h10M11 16c2 3 7 2 7-3"/></svg></button>
  <button class="run active" aria-label="2345看图王"><svg viewBox="0 0 24 24"><path fill="#ffb900" d="M0 0h12v12H0z"/><path fill="#7abb32" d="M12 0h12v12H12z"/><path fill="#f05133" d="M0 12h12v12H0z"/><path fill="#28a4d8" d="M12 12h12v12H12z"/><path fill="none" stroke="#fff" stroke-width="1.500" d="M3 5h18M6 3v4M12 3v4M18 3v4M6 9h12v12H6zM6 13h12M9 17h6"/></svg></button>
 </div>
 <div class="cpu">39%<br>CPU使用</div>
 <div class="tray">
  <svg viewBox="0 0 16 16"><path fill="none" stroke="#fff" stroke-width="1.300" d="m2 11 6-6 6 6"/></svg>
  <svg viewBox="0 0 16 16"><path fill="none" stroke="#fff" d="M5.500 5.500h9v6h-9zM3 3v9M.5 3v3h4V3"/><path fill="#fff" d="M7 7h6v3H7zM15 7h1v3h-1z"/></svg>
  <svg viewBox="0 0 16 16"><path fill="none" stroke="#ccc" d="M3 14C3 8 8 3 14 3M6 14c0-4 4-8 8-8M9 14c0-3 2-5 5-5"/><path fill="#fff" d="M11 14h3v-3z"/></svg>
  <svg viewBox="0 0 16 16"><path fill="none" stroke="#fff" d="M.5 5.500H3l3-3v11l-3-3H.5zM8.500 6c1 1 1 3 0 4M10.500 4c2 2 2 6 0 8M13 2c3 3 3 9 0 12"/></svg>
  <svg viewBox="0 0 16 16"><path fill="#fff" d="M0 1h16v11h-6l-2 4v-4H0z"/><path stroke="#000" d="M3 4.500h10M3 7.500h10"/></svg>
  <span>简体</span>
 </div>
 <time class="clock">11:58<br>2016/7/30</time>
</footer>
</body>
</html>
```
FILE: styles.css
```css
* { box-sizing: border-box; }
body { margin: 0; height: 100vh; display: flex; flex-direction: column; overflow: hidden; background: #efefef; color: #000; font: 12px/16px "Open Sans", "Noto Sans CJK SC", sans-serif; }
button { margin: 0; padding: 0; border: 0; background: none; color: inherit; font: inherit; white-space: nowrap; }
.sprite { position: absolute; width: 0; height: 0; }

.titlebar { position: relative; z-index: 5; flex: none; height: 25px; display: flex; align-items: center; padding: 0 9px 2px 5px; background: #467bd6; color: #fff; }
.titlebar .icon { width: 16px; height: 16px; margin-right: 4px; }
.titlebar h1 { margin: 0; font: inherit; white-space: nowrap; }
.window-buttons { margin-left: auto; display: flex; gap: 15px; }
.window-buttons button, .window-buttons svg { display: block; width: 16px; height: 16px; }
.badge { position: absolute; left: 218px; bottom: 7px; width: 47px; height: 47px; padding-top: 28px; border: 1px solid #fff; border-radius: 50%; background: #fa8028; color: #fff; text-align: center; font-weight: bold; line-height: 16px; }

.stage { position: relative; flex: 1; min-height: 0; display: flex; padding: 14px 53px; }
.picture { flex: 1; min-width: 0; display: flex; flex-direction: column; overflow: hidden; background: #f0f0f0; box-shadow: 0 0 6px 1px #888; }
.cut-strip { flex: none; height: 10px; padding-left: 960px; }
.cut-strip span { display: block; width: 52px; height: 5px; border: 2px solid #666; border-width: 0 1px 3px; background: #fff; box-shadow: 1px 2px 3px #aaa; }

.bar-row { flex: none; display: flex; gap: 3px; height: 26px; margin-bottom: 3px; }
.bar { display: flex; align-items: center; height: 26px; border-radius: 3px; background: linear-gradient(#fdfdfd, #f2f2f2); }
.grow { flex: 1; min-width: 0; }
.stub { width: 45px; justify-content: space-between; padding-right: 3px; }
.first-bar { width: 600px; }
.more { align-self: flex-start; margin-left: auto; padding-right: 4px; font: bold 15px/14px "Liberation Sans", sans-serif; }
.stub .more { margin: 0; padding: 0; }
.grip { flex: none; width: 2px; height: 16px; margin: 0 2px; background: repeating-linear-gradient(#aaa 0 2px, transparent 2px 5px); }
.sep { flex: none; width: 1px; height: 16px; margin-left: 5px; background: #bbb; }
.tool { flex: none; display: flex; align-items: center; height: 24px; padding: 1px 3px 0 4px; }
.tool svg { width: 16px; height: 16px; margin-right: 4px; }
.tool:disabled { color: #8c8c8c; }
.tool.on { background: #e5f0fb; box-shadow: inset 0 0 0 1px #3399ff; }
.tool.text { padding: 1px 5px 0; }
.arrow { flex: none; width: 12px; height: 3px; padding-left: 7px; }
.arrow::before { content: ""; display: block; width: 0; border: 3px solid transparent; border-top-color: #000; border-bottom: 0; }
.arrow.tight { width: 8px; padding-left: 2px; }
.arrow.split { padding-left: 3px; }
.combo { position: relative; flex: none; display: flex; align-items: center; width: 69px; height: 23px; margin: 0 2px 0 1px; background: linear-gradient(90deg, #fff 0 57px, #f6f6f6 57px); }
.combo::after { content: ""; position: absolute; right: 3px; top: 11px; border: 3px solid transparent; border-top-color: #000; border-bottom: 0; pointer-events: none; }
.combo select { width: 100%; padding: 0 14px 0 2px; border: 0; background: none; color: inherit; font: inherit; appearance: none; }
.combo.short { width: 57px; background: linear-gradient(90deg, #fff 0 45px, #f6f6f6 45px); }
.combo.narrow { width: 54px; background: linear-gradient(90deg, #fff 0 42px, #f6f6f6 42px); }
.combo.view { width: 60px; }
.combo.view svg { flex: none; width: 16px; height: 16px; margin: 0 0 0 2px; }
.combo.view select { padding-right: 0; }

.work { flex: 1; min-height: 0; display: flex; gap: 4px; }
.side { position: relative; flex: none; width: 123px; display: flex; flex-direction: column; }
.side-title { display: flex; justify-content: flex-end; height: 17px; background: #0055e5; }
.side-title svg { width: 34px; height: 17px; }
.side-tab { flex: none; height: 22px; overflow: hidden; border: solid #999; border-width: 1px 1px 1px 0; border-top-color: #ccc; background: #f0f0f0; text-align: left; text-indent: -3px; margin-right: 1px; }
.side-gap { flex: none; height: 28px; }
.tree { flex: 1; min-height: 0; margin: 0 1px 1px 0; padding: 0; overflow: hidden; list-style: none; border: solid #868a98; border-width: 1px 2px 2px 0; background: #fff; }
.tree li { height: 18px; margin-bottom: 14px; line-height: 18px; text-indent: -1px; }
.tree .cut { text-indent: -4px; }
.tree, .grid, .status { font-family: "Noto Sans CJK SC", sans-serif; font-feature-settings: "hwid"; }
.tree .new { margin-top: 139px; text-indent: 0; padding-left: 4px; line-height: 14px; }
.tree .new b { background: #ffdc00; font: bold 9px/9px "Open Sans", sans-serif; }
.ime { position: absolute; left: 0; top: 47px; width: 102px; height: 24px; border: 1px solid #b4c8d8; border-left: 0; background: #fff; }
.ime svg { display: block; width: 102px; height: 22px; }

.content { flex: 1; min-width: 0; display: flex; flex-direction: column; }
.content > .bar-row { padding-left: 2px; }
.tail { width: 29px; margin-right: 3px; }
.drawing { flex: none; height: 217px; margin: -2px 1px 1px 0; overflow: hidden; background: #000; }
.drawing svg { display: block; }
.snap-row .bar + .bar { padding-left: 1px; }

.sheet { flex: 1; min-height: 0; display: flex; }
.handle { flex: none; width: 12px; padding: 2px 1px; display: flex; flex-direction: column; gap: 3px; }
.handle svg { flex: none; width: 10px; height: 10px; }
.handle i { flex: 1; background: radial-gradient(circle, #aaa 0 1px, transparent 1px) 0 0 / 5px 5px; }
.sheet-main { flex: 1; min-width: 0; display: flex; flex-direction: column; margin-right: 1px; }
.sheet-bar { flex: none; height: 28px; padding-left: 1px; }
.grid { position: relative; flex: 1; min-height: 0; display: flex; flex-direction: column; justify-content: space-between; border: 1px solid #aaa; padding: 1px; background: #fff; }
table { width: 100%; table-layout: fixed; border-collapse: separate; border-spacing: 0; line-height: 14px; }
.w31 { width: 31px; } .w41 { width: 41px; } .w61 { width: 61px; } .w71 { width: 71px; } .w81 { width: 81px; } .w101 { width: 101px; }
th, td { height: 19px; padding: 0 0 3px; overflow: hidden; border: solid #c0c0c0; border-width: 0 1px 1px 0; white-space: nowrap; font-weight: normal; text-align: center; }
th { padding-bottom: 2px; background: linear-gradient(#fff, #ededed); }
th.left { text-align: left; text-indent: -2px; }
th.hot { background: linear-gradient(#f9d99f, #f0c060); color: #5c0060; }
td { padding-left: 2px; text-align: left; }
.frozen { border-right: 1px solid #000; }
thead .frozen { border-right-color: #c0c0c0; }
tbody th { padding-bottom: 3px; background: #f5f5f5; }
.current td { background: #a6c9ef; }
.current th { background: #ffd48a; color: #5c0060; }
u { display: inline-block; width: 12px; height: 10px; border-bottom: 1px solid #000; font-size: 11px; line-height: 8px; text-align: center; text-decoration: none; vertical-align: -1px; }
u.plain { border-color: transparent; }
td:nth-child(15) { padding-left: 4px; }
.current .focus { position: relative; outline: 3px solid #000; outline-offset: -2px; }
.scroll { display: flex; align-items: center; height: 16px; padding: 0 5px; background: #f0f0f0; color: #555; font: bold 18px/14px "Liberation Sans", sans-serif; }
.scroll i { width: 40%; height: 16px; margin: 0 auto 0 23%; background: #cdcdcd; }
.mark { position: absolute; border: 7px solid #f00; }
.m1 { left: 105px; top: 71px; width: 63px; height: 39px; }
.m2 { left: 643px; top: 65px; width: 104px; height: 38px; }
.m3 { left: 803px; top: 64px; width: 78px; height: 55px; }
.m4 { left: 972px; top: 67px; width: 117px; height: 45px; }

.status { flex: none; height: 13px; display: flex; gap: 2px; overflow: hidden; padding-top: 1px; }
.status span { flex: none; height: 22px; padding-left: 1px; overflow: hidden; border: 1px solid #ccc; line-height: 18px; white-space: nowrap; }
.status .s1 { width: 42px; } .status .s2 { width: 78px; } .status .s3 { width: 98px; } .status .s4 { width: 48px; }
.status .s5 { flex: 1; min-width: 0; } .status .s6 { width: 79px; padding-left: 9px; }

.viewer { position: absolute; left: 0; right: 0; bottom: 0; height: 39px; display: grid; grid-template-columns: 1fr auto 1fr; align-items: center; padding: 0 12px 0 13px; background: rgba(255, 255, 255, .5); color: #3a70c0; }
.viewer button { display: flex; align-items: center; justify-content: center; height: 24px; }
.viewer svg { width: 20px; height: 20px; }
.viewer text { fill: #3a70c0; font: 8px "Open Sans", sans-serif; }
.viewer-mid { display: flex; padding-left: 38px; }
.viewer-mid button { width: 39px; }
.viewer-mid .wide { width: 61px; }
.viewer .wide svg { width: 32px; height: 24px; }
.viewer-mid button:nth-child(5) { margin-left: 10px; }
.viewer-mid button:nth-child(6) { margin-right: 10px; }
.viewer-mid .ratio { width: 17px; margin: 0 11px; height: 17px; align-self: center; border-bottom: 2px solid #3a70c0; font-weight: bold; }
.viewer-end { display: flex; justify-content: flex-end; gap: 19px; }

.taskbar { flex: none; height: 40px; display: flex; align-items: stretch; background: #000; color: #fff; }
.start { width: 48px; display: flex; align-items: center; justify-content: center; }
.start svg, .tray svg { width: 16px; height: 16px; }
.search { flex: none; width: 344px; padding: 0 9px; border: 0; border-radius: 0; background: #333; font: 14px "Open Sans", "Noto Sans CJK SC", sans-serif; }
.search::placeholder { color: #a0a0a0; }
.apps { display: flex; padding-left: 1px; }
.apps button { position: relative; width: 49px; display: flex; align-items: center; justify-content: center; }
.apps svg { width: 24px; height: 24px; }
.apps .run::after { content: ""; position: absolute; left: 4px; right: 5px; bottom: 0; height: 2px; background: #76b9ed; }
.apps .active { background: #333; }
.apps .active::after { left: 0; right: 0; }
.task-sep { width: 4px; height: 16px; margin: 12px 11px 0 10px; border: solid #555; border-width: 0 1px; }
.cpu { margin-left: auto; text-align: center; padding-top: 4px; }
.tray { display: flex; align-items: center; gap: 8px; margin-left: 18px; }
.clock { width: 76px; margin: 0 4px 0 7px; padding-top: 3px; border-right: 1px solid #555; text-align: center; }
```
